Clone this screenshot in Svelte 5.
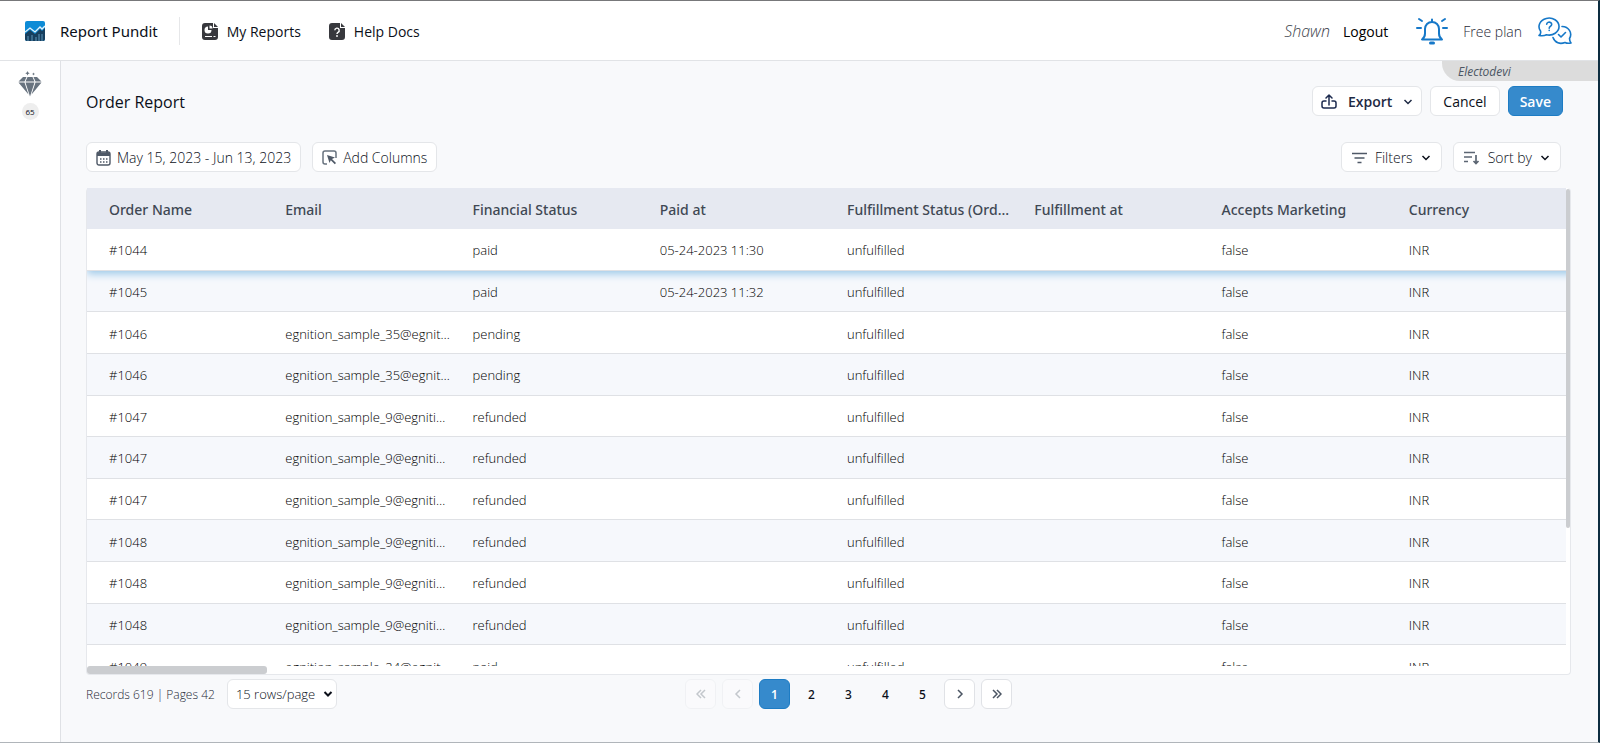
<script>
  const columns = [
    'Order Name', 'Email', 'Financial Status', 'Paid at', 'Fulfillment Status (Order Level)',
    'Fulfillment at', 'Accepts Marketing', 'Currency'
  ];

  const sample35 = 'egnition_sample_35@egnition.com';
  const sample9 = 'egnition_sample_9@egnition.com';

  const orders = [
    { name: '#1044', email: '', status: 'paid', paidAt: '05-24-2023 11:30' },
    { name: '#1045', email: '', status: 'paid', paidAt: '05-24-2023 11:32' },
    { name: '#1046', email: sample35, status: 'pending', paidAt: '' },
    { name: '#1046', email: sample35, status: 'pending', paidAt: '' },
    { name: '#1047', email: sample9, status: 'refunded', paidAt: '' },
    { name: '#1047', email: sample9, status: 'refunded', paidAt: '' },
    { name: '#1047', email: sample9, status: 'refunded', paidAt: '' },
    { name: '#1048', email: sample9, status: 'refunded', paidAt: '' },
    { name: '#1048', email: sample9, status: 'refunded', paidAt: '' },
    { name: '#1048', email: sample9, status: 'refunded', paidAt: '' },
    { name: '#1049', email: 'egnition_sample_24@egnition.com', status: 'paid', paidAt: '' }
  ];

  let page = $state(1);
  let activeRow = $state(0);
</script>

{#snippet chevron()}
  <svg class="chevron" viewBox="0 0 10 10" width="10" height="10"><path d="M1.5 3 5 6.5 8.5 3" /></svg>
{/snippet}

<div class="app">
  <header class="topbar">
    <a class="brand" href="#home">
      <svg width="20" height="20" viewBox="0 0 20 20">
        <rect width="20" height="20" rx="2" fill="#0d8bd6" />
        <path d="M0 13 5 9l5 4 5-5 2 2 3-3v11a2 2 0 0 1-2 2H2a2 2 0 0 1-2-2Z" fill="#173f5f" />
        <path d="m0 11 5-4 5 4 5-5 2 2 3-3" fill="none" stroke="#e4f3fc" stroke-width="1.3" />
        <path d="M3 20v-5M7 20v-6M11 20v-4M14 20v-7M17 20v-7" stroke="#5f97bb" stroke-width="1" />
      </svg>
      Report Pundit
    </a>
    <nav class="links">
      <a href="#reports">
        <svg width="16" height="17" viewBox="0 0 16 17">
          <path d="M3 0h8v5h5v9a3 3 0 0 1-3 3H3a3 3 0 0 1-3-3V3a3 3 0 0 1 3-3Z" fill="#37383d" />
          <path d="m12 0 4 4h-4Z" fill="#37383d" />
          <path d="M6 3.500A3.500 3.500 0 1 0 9.500 7H6Z" fill="#fff" />
          <path d="M7.500 2.500V5.500H10.500A3 3 0 0 0 7.500 2.500Z" fill="#fff" />
          <path d="M3 13.500h7M11.500 13.500h2" stroke="#fff" stroke-width="1.200" />
        </svg>
        My Reports
      </a>
      <a href="#help">
        <svg width="16" height="17" viewBox="0 0 16 17">
          <path d="M3 0h8v5h5v9a3 3 0 0 1-3 3H3a3 3 0 0 1-3-3V3a3 3 0 0 1 3-3Z" fill="#37383d" />
          <path d="m12 0 4 4h-4Z" fill="#37383d" />
          <path d="M5.800 7.300a2.200 2.200 0 1 1 3.200 2c-.8.400-1 .7-1 1.700" fill="none" stroke="#fff" stroke-width="1.400" />
          <circle cx="8" cy="13" r=".9" fill="#fff" />
        </svg>
        Help Docs
      </a>
    </nav>
    <div class="account">
      <span class="user">Shawn</span>
      <a class="logout" href="#logout">Logout</a>
      <button class="icon-button bell" aria-label="Notifications">
        <svg width="32" height="28" viewBox="0 0 32 28" fill="none" stroke="#1678c8" stroke-width="2" stroke-linecap="round" stroke-linejoin="round">
          <path d="M6 22.500h20c-2-1.500-3-3.500-3-6V12c0-4-3-7-7-7s-7 3-7 7v4.500c0 2.500-1 4.500-3 6ZM16 5V2.500" />
          <path d="M14.500 26h3" stroke-width="3" />
          <path d="m6 4-3-2M5 11H1M26 4l3-2M27 11h4" />
        </svg>
      </button>
      <span class="plan">Free plan</span>
      <button class="icon-button" aria-label="Chat support">
        <svg width="34" height="28" viewBox="0 0 34 28" fill="none" stroke="#1678c8" stroke-width="1.600" stroke-linecap="round" stroke-linejoin="round">
          <path d="M1 18.500c1.500-1 2-2.500 1.500-4.500a10 8.500 0 1 1 6 3.800c-2 1-4.500 1.200-7.500.7Z" />
          <path d="M8.700 7.200a2.500 2.200 0 1 1 3.800 2c-1 .6-1.300 1-1.300 2M11.200 13.300v.2" />
          <path d="M24 9.500a8.500 8 0 0 1 7.500 12c0 2 .5 3 1.500 4.500-2.500.6-4.500.3-6-.5-5 2-10 .5-12-5" />
          <path d="m20.500 17.500 2.500 2.500 4.500-4.500" />
        </svg>
      </button>
    </div>
  </header>

  <div class="body">
    <aside class="sidebar">
      <svg width="24" height="26" viewBox="0 0 24 26" fill="#68737f">
        <path d="M5 6h3.500L6.500 10.500H.5ZM9.500 6h5l2 4.500h-9ZM15.500 6H19l4.500 4.500h-6ZM.5 11.500h6l4 12ZM7.500 11.500h9L12 25.500ZM17.500 11.500h6l-10 12Z" />
        <path d="m9.500 0 .7 1.500 1.500.7-1.500.7-.7 1.500-.7-1.500-1.500-.7 1.500-.7ZM15.500 1.500l.5 1 1 .5-1 .5-.5 1-.5-1-1-.5 1-.5Z" />
      </svg>
      <span class="count">65</span>
    </aside>

    <main class="content">
      <div class="store">Electodevi</div>

      <div class="bar">
        <h1>Order Report</h1>
        <div class="group">
          <button class="btn export">
            <svg width="16" height="16" viewBox="0 0 16 16" fill="none" stroke="#1d2b4f" stroke-width="1.500" stroke-linecap="round" stroke-linejoin="round">
              <path d="M5 7H3a2 2 0 0 0-2 2v3a2 2 0 0 0 2 2h10a2 2 0 0 0 2-2V9a2 2 0 0 0-2-2h-2M8 11V1M5 4l3-3 3 3" />
            </svg>
            Export
            {@render chevron()}
          </button>
          <button class="btn cancel">Cancel</button>
          <button class="btn save">Save</button>
        </div>
      </div>

      <div class="bar tools">
        <div class="group wide">
          <button class="btn">
            <svg width="15" height="16" viewBox="0 0 15 16">
              <rect x="1" y="2" width="13" height="13" rx="2" fill="none" stroke="#4f5967" stroke-width="1.400" />
              <path d="M1 2.500h13V6H1ZM3 0h2v3H3ZM10 0h2v3h-2Z" fill="#4f5967" />
              <path d="M4 9h8M4 12h8" stroke="#4f5967" stroke-width="1.500" stroke-dasharray="1.500 1.500" />
            </svg>
            May 15, 2023 - Jun 13, 2023
          </button>
          <button class="btn">
            <svg width="15" height="16" viewBox="0 0 15 16">
              <path d="M5 14H3a2 2 0 0 1-2-2V3a2 2 0 0 1 2-2h9a2 2 0 0 1 2 2v5" fill="none" stroke="#68737f" stroke-width="1.500" />
              <path d="m5 5 8 2.500-3 1.600 4 4-1.200 1.200-4-4L7.500 13Z" fill="#4f5967" />
            </svg>
            Add Columns
          </button>
        </div>
        <div class="group wide">
          <button class="btn menu">
            <svg width="15" height="12" viewBox="0 0 15 12" stroke="#4f5967" stroke-width="1.500"><path d="M0 1.500h15M2.500 6h10M5.500 10.500h4" /></svg>
            Filters
            {@render chevron()}
          </button>
          <button class="btn menu">
            <svg width="16" height="14" viewBox="0 0 16 14" fill="none" stroke="#5c6673" stroke-width="1.700"><path d="M0 1.500h11M0 6h8M0 10.500h4M12 4v8.500M9.500 10l2.500 2.500 2.500-2.500" /></svg>
            Sort by
            {@render chevron()}
          </button>
        </div>
      </div>

      <div class="table-frame">
        <div class="table-scroll">
          <table>
            <thead>
              <tr>
                {#each columns as column}
                  <th scope="col">{column}</th>
                {/each}
              </tr>
            </thead>
            <tbody>
              {#each orders as order, i}
                <tr class:active={i === activeRow} onmouseenter={() => (activeRow = i)}>
                  <td>{order.name}</td>
                  <td>{order.email}</td>
                  <td>{order.status}</td>
                  <td>{order.paidAt}</td>
                  <td>unfulfilled</td>
                  <td></td>
                  <td>false</td>
                  <td>INR</td>
                </tr>
              {/each}
            </tbody>
          </table>
        </div>
        <div class="track-y"><div class="thumb"></div></div>
        <div class="track-x"><div class="thumb"></div></div>
      </div>

      <footer class="pager">
        <div class="records">
          <span>Records 619 | Pages 42</span>
          <div class="select">
            <select aria-label="Rows per page">
              <option>15 rows/page</option>
              <option>25 rows/page</option>
              <option>50 rows/page</option>
            </select>
            {@render chevron()}
          </div>
        </div>
        <nav class="pages" aria-label="Pagination">
          <button class="page boxed" disabled aria-label="First page">
            <svg width="10" height="10" viewBox="0 0 10 10"><path d="M5 1 1 5l4 4M9 1 5 5l4 4" /></svg>
          </button>
          <button class="page boxed" disabled aria-label="Previous page">
            <svg width="10" height="10" viewBox="0 0 10 10"><path d="M7 1 3 5l4 4" /></svg>
          </button>
          {#each [1, 2, 3, 4, 5] as n}
            <button class="page" class:current={n === page} onclick={() => (page = n)}>{n}</button>
          {/each}
          <button class="page boxed" aria-label="Next page" onclick={() => (page += 1)}>
            <svg width="10" height="10" viewBox="0 0 10 10"><path d="m3 1 4 4-4 4" /></svg>
          </button>
          <button class="page boxed" aria-label="Last page" onclick={() => (page = 42)}>
            <svg width="10" height="10" viewBox="0 0 10 10"><path d="m1 1 4 4-4 4M5 1l4 4-4 4" /></svg>
          </button>
        </nav>
      </footer>
    </main>
  </div>
</div>

<style>
  :global(body) {
    margin: 0;
    font-family: "Open Sans", "Noto Sans", sans-serif;
    color: #0b0f19;
  }

  .app {
    box-sizing: border-box;
    display: flex;
    flex-direction: column;
    min-height: 100vh;
    border-top: 1px solid #77787a;
    border-right: 2px solid #0d2d40;
    border-bottom: 1px solid #b0b5ba;
    background-color: #f8f9fb;
  }

  svg {
    flex: none;
    display: block;
  }

  a {
    color: inherit;
    text-decoration: none;
  }

  button {
    font: inherit;
    color: inherit;
    cursor: pointer;
  }

  /* top bar */
  .topbar {
    display: flex;
    align-items: center;
    box-sizing: border-box;
    height: 60px;
    padding: 1px 26px 0 25px;
    border-bottom: 1px solid #e1e3e6;
    background-color: #fff;
    font-size: 14px;
  }

  .brand {
    display: flex;
    align-items: center;
    gap: 15px;
    padding-right: 21px;
    border-right: 1px solid #e6e7e9;
    font-family: "Noto Sans", "Open Sans", sans-serif;
    font-size: 15px;
    line-height: 28px;
  }

  .links {
    display: flex;
    gap: 28px;
    padding-left: 22px;
  }

  .links a {
    display: flex;
    align-items: center;
    gap: 9px;
  }

  .account {
    display: flex;
    align-items: center;
    margin-left: auto;
  }

  .user {
    margin-right: 13px;
    color: #3c424b;
    font-size: 16px;
    font-style: italic;
    font-weight: 300;
  }

  .logout {
    color: #000;
  }

  .icon-button {
    padding: 0;
    border: 0;
    background: none;
  }

  .bell {
    margin: 0 15px 0 28px;
  }

  .plan {
    margin-right: 16px;
    color: #1f2937;
    font-weight: 300;
  }

  /* side rail */
  .body {
    flex: 1;
    display: flex;
  }

  .sidebar {
    display: flex;
    flex-direction: column;
    align-items: center;
    gap: 6px;
    width: 60px;
    padding-top: 10px;
    border-right: 1px solid #dfe1e5;
    background-color: #fff;
  }

  .count {
    width: 17px;
    border-radius: 50%;
    background-color: #eee;
    font-size: 8px;
    line-height: 17px;
    text-align: center;
  }

  /* report */
  .content {
    position: relative;
    flex: 1;
    min-width: 0;
    padding: 25px 27px 0 25px;
  }

  .store {
    position: absolute;
    top: 0;
    right: 0;
    width: 140px;
    padding: 2px 0 0 16px;
    border-bottom-left-radius: 18px;
    background-color: #dcdcdc;
    color: #4b5563;
    font-size: 12px;
    font-style: italic;
    line-height: 18px;
  }

  .bar {
    display: flex;
    align-items: center;
    justify-content: space-between;
    padding-right: 8px;
  }

  .tools {
    padding-right: 10px;
    margin: 26px 0 16px;
  }

  h1 {
    margin: 0;
    padding-top: 2px;
    font-size: 16px;
    font-weight: 400;
  }

  .group {
    display: flex;
    gap: 8px;
  }

  .wide {
    gap: 11px;
  }

  .btn {
    box-sizing: border-box;
    display: flex;
    align-items: center;
    gap: 6px;
    height: 30px;
    padding: 1px 9px 0;
    border: 1px solid #e4e6e9;
    border-radius: 6px;
    background-color: #fff;
    font-size: 14px;
    font-weight: 300;
    white-space: nowrap;
  }

  .menu {
    gap: 8px;
    padding: 1px 10px 0;
  }

  .export {
    gap: 11px;
    padding: 1px 8px 0;
    font-weight: 600;
    color: #1f2a44;
  }

  .cancel {
    padding: 0 12px;
    font-weight: 400;
  }

  .save {
    padding: 0 11px;
    border-color: #1d7cc4;
    background-color: #368acc;
    color: #fff;
    font-weight: 600;
  }

  .chevron,
  .page svg {
    fill: none;
    stroke: currentColor;
    stroke-width: 1.5;
  }

  /* table */
  .table-frame {
    display: grid;
    grid-template-columns: 1fr 4px;
    grid-template-rows: calc(100vh - 265px) 8px;
    border: 1px solid #e6e8ec;
    border-top: 0;
    border-radius: 4px;
    background-color: #fff;
  }

  .table-scroll {
    overflow: auto;
    scrollbar-width: none;
  }

  table {
    width: 100%;
    min-width: 1498px;
    height: 499px;
    border-collapse: separate;
    border-spacing: 0;
    table-layout: fixed;
  }

  th,
  td {
    box-sizing: border-box;
    padding: 2px 11px 0;
    overflow: hidden;
    text-align: left;
    text-overflow: ellipsis;
    white-space: nowrap;
  }

  th:first-child,
  td:first-child {
    padding-left: 22px;
  }

  thead {
    position: relative;
    z-index: 1;
  }

  th {
    height: 41px;
    background-color: #e6e9f1;
    color: #3f4854;
    font-family: "Noto Sans", "Open Sans", sans-serif;
    font-size: 14px;
    font-weight: 500;
  }

  td {
    border-bottom: 1px solid #dfe1e5;
    color: #000;
    font-size: 13px;
    font-weight: 300;
  }

  tbody tr {
    background-color: #fff;
  }

  tbody tr:nth-child(even) {
    background-color: #f6f8fc;
  }

  .active {
    position: relative;
    box-shadow: 0 3px 8px #9cc8e8;
  }

  .thumb {
    border-radius: 3px;
    background-color: #cbcdd0;
  }

  .track-y .thumb {
    height: 71%;
    margin-top: 1px;
  }

  .track-x {
    grid-column: 1 / -1;
  }

  .track-x .thumb {
    width: 180px;
    height: 8px;
  }

  /* pager */
  .pager {
    display: grid;
    grid-template-columns: 1fr auto 1fr;
    align-items: center;
    padding: 4px 0 33px;
    font-size: 13px;
  }

  .records {
    display: flex;
    align-items: center;
    gap: 12px;
    color: #1f2937;
    font-size: 12px;
    font-weight: 300;
  }

  .select {
    position: relative;
    display: flex;
    align-items: center;
    color: #0b0f19;
    font-size: 13px;
  }

  .select .chevron {
    position: absolute;
    right: 4px;
    stroke-width: 2;
    pointer-events: none;
  }

  select {
    appearance: none;
    height: 30px;
    padding: 0 20px 0 8px;
    border: 1px solid #e4e6e9;
    border-radius: 6px;
    background-color: #fff;
    color: inherit;
    font: inherit;
  }

  .pages {
    display: flex;
    gap: 6px;
    padding-left: 40px;
  }

  .page {
    display: grid;
    place-items: center;
    width: 31px;
    height: 30px;
    padding: 0;
    border: 1px solid transparent;
    border-radius: 6px;
    background: none;
    font-family: "Noto Sans", "Open Sans", sans-serif;
    font-size: 12px;
    font-weight: 500;
  }

  .boxed {
    border-color: #e0e2e6;
    background-color: #fff;
    color: #4b5563;
  }

  .boxed:disabled {
    opacity: 0.3;
  }

  .current {
    border-color: #1d7cc4;
    background-color: #368acc;
    color: #fff;
    font-weight: 600;
  }
</style>
